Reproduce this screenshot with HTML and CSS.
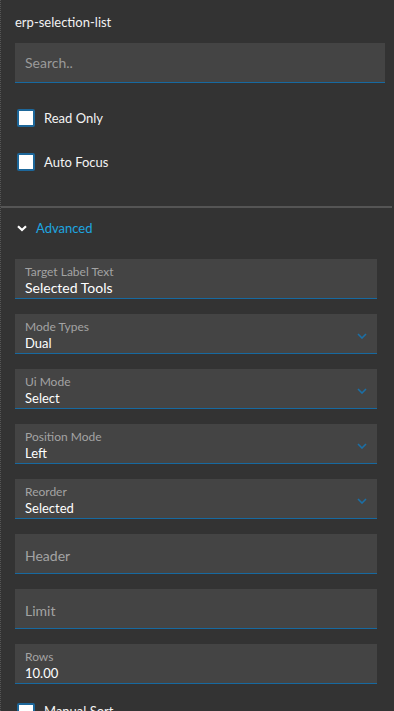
FILE: index.html
```html
<!DOCTYPE html>
<html lang="en">
<head>
  <meta charset="UTF-8">
  <title>erp-selection-list</title>
  <link rel="stylesheet" href="styles.css">
</head>
<body>
  <div class="panel">

    <div class="top-section">
      <div class="title">erp-selection-list</div>
      <div class="search-box">
        <input type="text" placeholder="Search..">
      </div>
      <label class="check-row">
        <span class="check-box"></span>
        Read Only
      </label>
      <label class="check-row">
        <span class="check-box"></span>
        Auto Focus
      </label>
    </div>

    <div class="divider"></div>

    <div class="advanced">
      <div class="advanced-head">
        <svg class="adv-chevron" width="10" height="7" viewBox="0 0 10 7">
          <path d="M1 1.2 L5 5 L9 1.2" fill="none" stroke="#fff" stroke-width="2.2"/>
        </svg>
        <span>Advanced</span>
      </div>

      <div class="field">
        <div class="field-label">Target Label Text</div>
        <div class="field-value">Selected Tools</div>
      </div>

      <div class="field select">
        <div class="field-label">Mode Types</div>
        <div class="field-value">Dual</div>
        <svg class="drop-chevron" width="10" height="6" viewBox="0 0 10 6">
          <path d="M1 1 L5 5 L9 1" fill="none" stroke="#1b6fa6" stroke-width="1.6"/>
        </svg>
      </div>

      <div class="field select">
        <div class="field-label">Ui Mode</div>
        <div class="field-value">Select</div>
        <svg class="drop-chevron" width="10" height="6" viewBox="0 0 10 6">
          <path d="M1 1 L5 5 L9 1" fill="none" stroke="#1b6fa6" stroke-width="1.6"/>
        </svg>
      </div>

      <div class="field select">
        <div class="field-label">Position Mode</div>
        <div class="field-value">Left</div>
        <svg class="drop-chevron" width="10" height="6" viewBox="0 0 10 6">
          <path d="M1 1 L5 5 L9 1" fill="none" stroke="#1b6fa6" stroke-width="1.6"/>
        </svg>
      </div>

      <div class="field select">
        <div class="field-label">Reorder</div>
        <div class="field-value">Selected</div>
        <svg class="drop-chevron" width="10" height="6" viewBox="0 0 10 6">
          <path d="M1 1 L5 5 L9 1" fill="none" stroke="#1b6fa6" stroke-width="1.6"/>
        </svg>
      </div>

      <div class="field empty">
        <div class="placeholder">Header</div>
      </div>

      <div class="field empty">
        <div class="placeholder">Limit</div>
      </div>

      <div class="field">
        <div class="field-label">Rows</div>
        <div class="field-value">10.00</div>
      </div>

      <label class="check-row last">
        <span class="check-box"></span>
        Manual Sort
      </label>
    </div>

  </div>
</body>
</html>
```

FILE: styles.css
```css
body {
  margin: 0;
  padding: 0;
  background: #333;
  font-family: Lato, "Liberation Sans", sans-serif;
  color: #fff;
  height: 100vh;
  overflow: hidden;
}

.panel {
  border-left: 1px dotted #555;
  height: 100%;
  box-sizing: border-box;
}

.top-section {
  padding: 14px 9px 22px 14px;
}

.title {
  font-size: 13px;
  line-height: 16px;
  color: #f2f2f2;
}

.search-box {
  margin-top: 13px;
  height: 39px;
  background: #444;
  border-bottom: 1px solid #1769a0;
  display: flex;
  align-items: center;
}

.search-box input {
  background: transparent;
  border: 0;
  outline: none;
  width: 100%;
  padding: 0 10px;
  font-family: inherit;
  font-size: 14px;
  color: #fff;
}

.search-box input::placeholder {
  color: #9a9a9a;
}

.check-row {
  display: flex;
  align-items: center;
  height: 44px;
  font-size: 13px;
  color: #f4f4f4;
}

.top-section .check-row:first-of-type {
  margin-top: 13px;
}

.check-box {
  width: 14px;
  height: 14px;
  border: 2px solid #1d679a;
  border-radius: 2px;
  background: #fff;
  margin: 0 9px 0 2px;
}

.divider {
  height: 2px;
  margin-right: 2px;
  background: #555;
}

.advanced {
  padding: 10px 17px 0 14px;
}

.advanced-head {
  display: flex;
  align-items: center;
  height: 20px;
  font-size: 13px;
  color: #1ea6e0;
}

.adv-chevron {
  margin: 0 9px 0 2px;
}

.field {
  position: relative;
  margin-top: 15px;
  background: #444;
  border-bottom: 1px solid #1769a0;
  padding: 5px 10px 0;
  height: 34px;
}

.advanced-head + .field {
  margin-top: 21px;
}

.field-label {
  font-size: 12px;
  line-height: 15px;
  color: #a3a3a3;
}

.field-value {
  font-size: 13px;
  line-height: 18px;
  color: #fff;
}

.advanced-head + .field .field-value {
  font-size: 14px;
}

.field.empty {
  padding-top: 3px;
  height: 36px;
  display: flex;
  align-items: center;
}

.placeholder {
  font-size: 14px;
  color: #a3a3a3;
}

.drop-chevron {
  position: absolute;
  right: 10px;
  top: 19px;
}

.check-row.last {
  margin-top: 4px;
  align-items: flex-start;
  padding-top: 15px;
  box-sizing: border-box;
}
```
